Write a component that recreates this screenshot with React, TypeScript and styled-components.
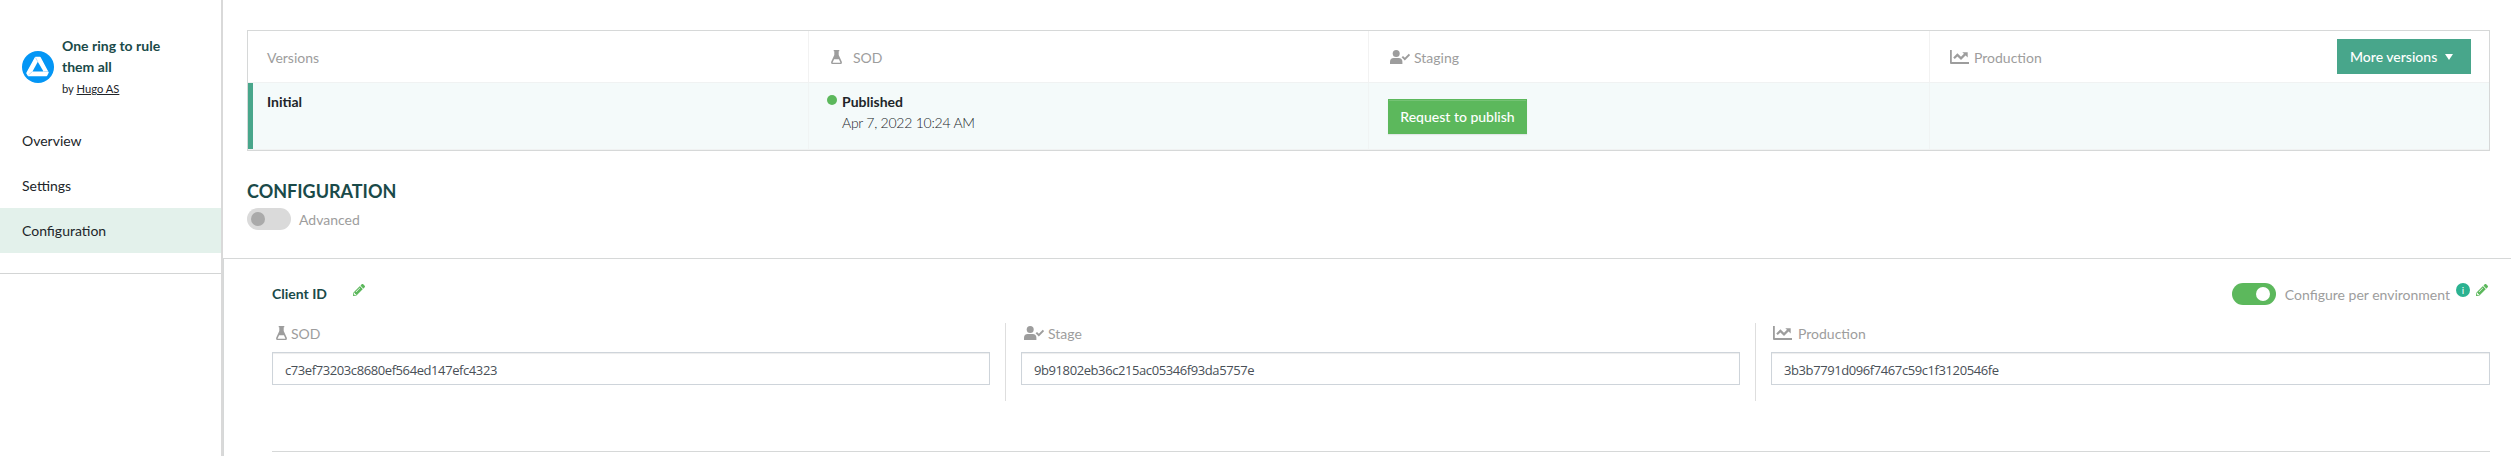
import React from "react";
import styled, { createGlobalStyle } from "styled-components";
import { FaPencilAlt } from "react-icons/fa";

const Global = createGlobalStyle`
  * { box-sizing: border-box; }
  body { margin: 0; background: #fff; font-family: Lato, "Liberation Sans", sans-serif; font-size: 14px; color: #212529; overflow: hidden; }
`;

const Page = styled.div`
  display: flex;
  height: 456px;
`;

const Sidebar = styled.aside`
  width: 223px;
  flex: none;
  border-right: 2px solid #d9d9d9;
`;

const AppCard = styled.div`
  display: flex;
  align-items: center;
  gap: 8px;
  height: 118px;
  padding: 16px 22px 0;
`;

const AppLogo = styled.svg`
  width: 32px;
  height: 32px;
  flex: none;
`;

const AppName = styled.div`
  width: 110px;
  font-weight: 700;
  line-height: 21px;
  color: #1a4a49;
`;

const AppOwner = styled.div`
  margin-top: 1px;
  font-size: 11.2px;
  line-height: 21px;
  color: #212529;
  font-weight: 400;
`;

const Link = styled.a`
  text-decoration: underline;
`;

const Menu = styled.nav`
  height: 156px;
  border-bottom: 1px solid #d3d5d5;
`;

const MenuItem = styled.div<{ $active?: boolean }>`
  height: 45px;
  padding-left: 22px;
  line-height: 46px;
  background: ${(p) => (p.$active ? "#e3f1eb" : "transparent")};
`;

const Main = styled.main`
  flex: 1;
  min-width: 0;
`;

const Top = styled.section`
  height: 258px;
  padding: 30px 21px 0 24px;
`;

const Table = styled.div`
  height: 121px;
  border: 1px solid #d6d8d8;
  display: grid;
  grid-template-rows: 52px 67px;
`;

const TableRow = styled.div<{ $current?: boolean }>`
  display: grid;
  grid-template-columns: 561px 560px 561px 1fr;
  background: ${(p) => (p.$current ? "#f4fafa" : "#fff")};
  border-bottom: 1px solid #f0f2f2;
  box-shadow: ${(p) => (p.$current ? "inset 5px 0 #48a68b" : "none")};
`;

const HeadCell = styled.div<{ $gap?: number; $inset?: number }>`
  display: flex;
  align-items: center;
  gap: ${(p) => p.$gap ?? 5}px;
  padding: 1px 18px 0 ${(p) => p.$inset ?? 19}px;
  color: #9d9d9d;
  border-right: 1px solid #f2f2f2;
  &:last-child { border-right: 0; }
`;

const Cell = styled.div<{ $inset?: number }>`
  padding: 8px 18px 0 ${(p) => p.$inset ?? 19}px;
  border-right: 1px solid #f0f4f4;
  &:last-child { border-right: 0; }
`;

const Current = styled.div`
  line-height: 21px;
  font-weight: 700;
`;

const Status = styled.div`
  display: flex;
  gap: 5px;
  line-height: 21px;
`;

const Dot = styled.span`
  width: 10px;
  height: 10px;
  margin-top: 4px;
  border-radius: 50%;
  background: #5cb85c;
`;

const Strong = styled.div`
  font-weight: 700;
`;

const Light = styled.div`
  font-weight: 300;
  letter-spacing: -0.24px;
`;

const PublishButton = styled.button`
  display: block;
  width: 139px;
  height: 35px;
  margin-top: 8px;
  padding: 0;
  border: 1px solid #5cb85c;
  background: #5cb85c;
  color: #fff;
  font: 500 14px Lato, sans-serif;
  box-shadow: inset 0 1px 0 rgba(255, 255, 255, 0.15), 0 1px 1px rgba(0, 0, 0, 0.075);
`;

const MoreButton = styled.button`
  display: flex;
  align-items: center;
  gap: 8px;
  width: 134px;
  height: 35px;
  margin: -1px 0 0 auto;
  padding: 0 0 0 13px;
  border: 0;
  background: #48a68b;
  color: #fff;
  font: 500 14px Lato, sans-serif;
`;

const Caret = styled.svg`
  width: 8px;
  height: 6px;
`;

const Heading = styled.h1`
  margin: 26px 0 3px;
  font-size: 18px;
  line-height: 28px;
  font-weight: 700;
  color: #1a4a49;
`;

const SwitchRow = styled.label`
  display: flex;
  align-items: center;
  gap: 8px;
  height: 22px;
  color: #9d9d9d;
`;

const Track = styled.span<{ $on?: boolean }>`
  display: flex;
  align-items: center;
  justify-content: ${(p) => (p.$on ? "flex-end" : "flex-start")};
  width: 44px;
  height: 22px;
  margin-right: ${(p) => (p.$on ? 1 : 0)}px;
  padding: 0 ${(p) => (p.$on ? 6 : 4)}px 0 4px;
  border-radius: 11px;
  background: ${(p) => (p.$on ? "#5cb85c" : "#dadada")};
`;

const Knob = styled.span<{ $on?: boolean }>`
  width: 14px;
  height: 14px;
  border-radius: 50%;
  background: ${(p) => (p.$on ? "#fff" : "#aaa")};
`;

const Panel = styled.section`
  height: 198px;
  border: solid #d6d8d8;
  border-width: 1px 0 0 1px;
  padding: 24px 21px 0 48px;
`;

const FieldHeader = styled.div`
  display: flex;
  align-items: center;
  height: 22px;
`;

const FieldTitle = styled.div`
  width: 81px;
  padding-bottom: 1px;
  font-weight: 700;
  color: #1a4a49;
`;

const Tools = styled.div`
  display: flex;
  align-items: center;
  gap: 6px;
  margin: 0 2px 0 auto;
`;

const Edit = styled(FaPencilAlt)`
  width: 12px;
  height: 12px;
  margin-top: -8px;
  color: #5cb85c;
`;

const Info = styled.span`
  width: 14px;
  height: 14px;
  margin-top: -8px;
  border-radius: 50%;
  background: #2bb291;
  color: #fff;
  font-size: 10px;
  line-height: 14px;
  text-align: center;
`;

const Fields = styled.div`
  display: grid;
  grid-template-columns: 734px 750px 1fr;
  height: 147px;
  padding-top: 18px;
  border-bottom: 1px solid #d6d8d8;
`;

const Field = styled.div`
  height: 78px;
  padding: 0 15px;
  border-right: 1px solid #dedede;
  &:first-child { padding-left: 0; }
  &:last-child { padding-right: 0; border-right: 0; }
`;

const Environment = styled.div<{ $gap: number; $inset: number }>`
  display: flex;
  align-items: center;
  gap: ${(p) => p.$gap}px;
  height: 29px;
  padding: 0 0 9px ${(p) => p.$inset}px;
  color: #9d9d9d;
`;

const Input = styled.input`
  display: block;
  width: 100%;
  height: 33px;
  padding: 2px 12px 0;
  border: 1px solid #ced4da;
  box-shadow: inset 0 1px 1px rgba(0, 0, 0, 0.075);
  color: #495057;
  font: 13px "Open Sans", sans-serif;
  letter-spacing: -0.41px;
`;

const FlaskIcon = () => (
  <svg width="11" height="14" viewBox="0 0 11 14">
    <path
      fill="#9d9d9d"
      fillRule="evenodd"
      d="M2.7 0h5.6v1.3h-.6V5l3.1 6.8Q11.3 14 9.6 14H1.4Q-.3 14 .2 11.800L3.300 5V1.300h-.6zM3.100 9.300 1.700 12.200q-.2.5.3.5h7q.5 0 .3-.5L7.900 9.300z"
    />
  </svg>
);

const UserCheckIcon = () => (
  <svg width="20" height="14" viewBox="0 0 20 14">
    <circle cx="6.2" cy="3.500" r="3.500" fill="#9d9d9d" />
    <path fill="#9d9d9d" d="M0 14v-2.200Q0 8 3.800 8h4.800q3.800 0 3.800 3.800V14z" />
    <path fill="none" stroke="#9d9d9d" strokeWidth="2" d="m12.300 6.600 2.500 2.500 4.700-4.700" />
  </svg>
);

const ChartIcon = () => (
  <svg width="19" height="14" viewBox="0 0 19 14">
    <path fill="#9d9d9d" d="M0 0h1.800v12H19v2H1q-1 0-1-1zM12.300 2.200h5.400v5.300z" />
    <path fill="none" stroke="#9d9d9d" strokeWidth="2.200" d="m4 8.300 3.400-3.400 3.600 3.500 4.500-4.500" />
  </svg>
);

const App = () => (
  <Page>
    <Global />
    <Sidebar>
      <AppCard>
        <AppLogo viewBox="0 0 32 32">
          <circle cx="16" cy="16" r="16" fill="#0496f5" />
          <path d="M13.500 6.500h4.500L26 21.500l-1.500 3H6.500L5 22z" fill="#fff" stroke="#fff" strokeWidth="1.500" strokeLinejoin="round" />
          <path d="m15.800 10.800 5.700 9.700h-11z" fill="#0496f5" />
          <path d="m13.500 6.500 2.300 4.300M10.500 20.500 6.500 24M21.500 20.500h4.500" stroke="#a9d8fa" strokeWidth=".8" />
        </AppLogo>
        <AppName>
          One ring to rule them all
          <AppOwner>by <Link>Hugo AS</Link></AppOwner>
        </AppName>
      </AppCard>
      <Menu>
        <MenuItem>Overview</MenuItem>
        <MenuItem>Settings</MenuItem>
        <MenuItem $active>Configuration</MenuItem>
      </Menu>
    </Sidebar>
    <Main>
      <Top>
        <Table>
          <TableRow>
            <HeadCell>Versions</HeadCell>
            <HeadCell $gap={11} $inset={22}><FlaskIcon />SOD</HeadCell>
            <HeadCell $gap={4} $inset={21}><UserCheckIcon />Staging</HeadCell>
            <HeadCell $inset={20}>
              <ChartIcon />Production
              <MoreButton>More versions<Caret viewBox="0 0 8 6"><path d="M0 0h8L4 6z" fill="#fff" /></Caret></MoreButton>
            </HeadCell>
          </TableRow>
          <TableRow $current>
            <Cell><Current>Initial</Current></Cell>
            <Cell $inset={18}>
              <Status>
                <Dot />
                <div><Strong>Published</Strong><Light>Apr 7, 2022 10:24 AM</Light></div>
              </Status>
            </Cell>
            <Cell><PublishButton>Request to publish</PublishButton></Cell>
            <Cell />
          </TableRow>
        </Table>
        <Heading>CONFIGURATION</Heading>
        <SwitchRow><Track><Knob /></Track>Advanced</SwitchRow>
      </Top>
      <Panel>
        <FieldHeader>
          <FieldTitle>Client ID</FieldTitle>
          <Edit />
          <Tools>
            <SwitchRow><Track $on><Knob $on /></Track>Configure per environment</SwitchRow>
            <Info>i</Info>
            <Edit />
          </Tools>
        </FieldHeader>
        <Fields>
          <Field>
            <Environment $gap={4} $inset={4}><FlaskIcon />SOD</Environment>
            <Input readOnly value="c73ef73203c8680ef564ed147efc4323" />
          </Field>
          <Field>
            <Environment $gap={4} $inset={3}><UserCheckIcon />Stage</Environment>
            <Input readOnly value="9b91802eb36c215ac05346f93da5757e" />
          </Field>
          <Field>
            <Environment $gap={6} $inset={2}><ChartIcon />Production</Environment>
            <Input readOnly value="3b3b7791d096f7467c59c1f3120546fe" />
          </Field>
        </Fields>
      </Panel>
    </Main>
  </Page>
);

export default App;
